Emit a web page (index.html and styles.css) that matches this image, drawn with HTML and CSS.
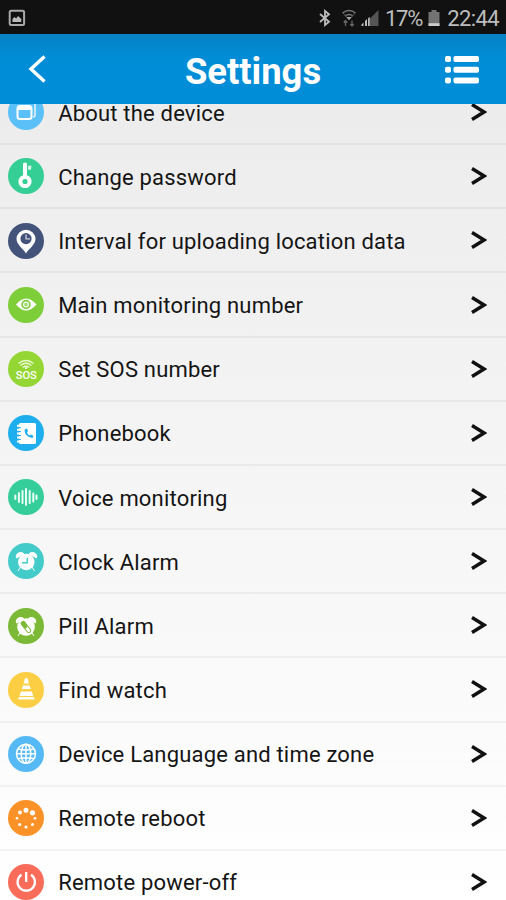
FILE: index.html
```html
<!DOCTYPE html>
<html lang="en">
<head>
<meta charset="utf-8">
<title>Settings</title>
<link rel="stylesheet" href="styles.css">
</head>
<body>
<div class="screen">
  <div class="status-bar">
    <svg class="status-picture" viewBox="0 0 18 18"><rect x="1.700" y="1.700" width="14.400" height="14.400" rx="1.500" fill="none" stroke="#aaa" stroke-width="2"/><path d="M4.500 13V10l2-2 1.600 1.400L10 7l3.300 3v3z" fill="#bbb"/></svg>
    <div class="status-right">
      <svg class="bluetooth" viewBox="0 0 14 18"><path d="M2 5l9 7.700L7 16V2l4 3.300L2 13" fill="none" stroke="#bbb" stroke-width="1.800"/></svg>
      <svg class="wifi" viewBox="0 0 16 18"><path d="M1.500 4Q8-.8 14.500 4M4 7q4-3 8 0" fill="none" stroke="#777" stroke-width="1.500"/><path d="M2 4l6 7 6-7" fill="none" stroke="#555" stroke-width="1"/><path d="M5.500 8h5L8 11z" fill="#aaa"/><path d="M4.500 11.500V17M2.700 13.500l1.800-2 1.800 2M11 11.500V17M9.200 15l1.800 2 1.800-2" fill="none" stroke="#666" stroke-width="1.300"/></svg>
      <svg class="signal" viewBox="0 0 18 18"><path d="M9 9.500L17.500 1v16H9z" fill="#555"/><path d="M.5 17v-1.500L2.500 13.500V17zM4 17v-5l2-2v7zM7 17V9.500l1.800-1.800V17z" fill="#bbb"/></svg>
      <span class="percent">17%</span>
      <svg class="battery" viewBox="0 0 12 18"><path d="M3.500 1h5v2H11.500v14H.5V3h3z" fill="#737373"/><path d="M.5 14.200h11V17H.5z" fill="#ccc"/></svg>
      <span class="time">22:44</span>
    </div>
  </div>
  <header class="title-bar">
    <svg class="back" viewBox="0 0 20 32"><path d="M16.500 3.500L3 16l13.500 12.500" fill="none" stroke="#fff" stroke-width="3.400"/></svg>
    <h1>Settings</h1>
    <svg class="menu" viewBox="0 0 36 30"><g fill="#fff"><rect x="1" y="1" width="6" height="6" rx="1.800"/><rect x="9.500" y="1" width="25.500" height="6" rx="1.800"/><rect x="1" y="11.700" width="6" height="6" rx="1.800"/><rect x="9.500" y="11.700" width="25.500" height="6" rx="1.800"/><rect x="1" y="22.400" width="6" height="6" rx="1.800"/><rect x="9.500" y="22.400" width="25.500" height="6" rx="1.800"/></g></svg>
  </header>
  <main class="viewport">
    <ul class="list">
      <li class="row">
        <svg class="icon" viewBox="0 0 36 36"><circle cx="18" cy="18" r="18" fill="#5bc0f8"/><path d="M12.500 10q0-2 2-2H25q2 0 2 2v11q0 2-2 2" fill="none" stroke="#e6f6ff" stroke-width="1.500"/><rect x="9.500" y="12" width="14" height="13" rx="2.500" fill="none" stroke="#fff" stroke-width="2"/><path d="M9.500 12h14v4h-14z" fill="#fff"/></svg>
        <span class="label">About the device</span><svg class="arrow" viewBox="0 0 16 18"><path d="M1 1.500L13 9 1 16.500"/></svg>
      </li>
      <li class="row">
        <svg class="icon" viewBox="0 0 36 36"><circle cx="18" cy="18" r="18" fill="#35cf95"/><circle cx="17" cy="23.500" r="4.600" fill="none" stroke="#fff" stroke-width="4"/><path d="M15 6q0-1.500 2-1.500T19 6v14h-4z" fill="#fff"/><path d="M20 7.800h3.500l-.6 4H20z" fill="#d5f8e9"/></svg>
        <span class="label">Change password</span><svg class="arrow" viewBox="0 0 16 18"><path d="M1 1.500L13 9 1 16.500"/></svg>
      </li>
      <li class="row">
        <svg class="icon" viewBox="0 0 36 36"><circle cx="18" cy="18" r="18" fill="#43537a"/><path d="M18 30.500C15.500 26 8.500 21.500 8.500 16a9.500 9.300 0 0 1 19 0C27.500 21.500 20.500 26 18 30.500z" fill="#fff"/><circle cx="18" cy="15.600" r="5.600" fill="#43537a"/><path d="M18 11.500v4.300h4" fill="none" stroke="#c9cedb" stroke-width="1.300"/></svg>
        <span class="label">Interval for uploading location data</span><svg class="arrow" viewBox="0 0 16 18"><path d="M1 1.500L13 9 1 16.500"/></svg>
      </li>
      <li class="row">
        <svg class="icon" viewBox="0 0 36 36"><circle cx="18" cy="18" r="18" fill="#7dce38"/><path d="M8 17.500Q18 5.500 28.500 17.500 18 29.500 8 17.500z" fill="#fff"/><circle cx="18" cy="17.500" r="3.900" fill="none" stroke="#7dce38" stroke-width="1.700"/><circle cx="18" cy="17.500" r="1.900" fill="#a5dd76"/></svg>
        <span class="label">Main monitoring number</span><svg class="arrow" viewBox="0 0 16 18"><path d="M1 1.500L13 9 1 16.500"/></svg>
      </li>
      <li class="row">
        <svg class="icon" viewBox="0 0 36 36"><circle cx="18" cy="18" r="18" fill="#94d735"/><path d="M10.500 12.500Q18 6.500 25.500 12.500M12.500 14.500q5.500-4.500 11 0M14.800 16.500q3.200-2.500 6.400 0" fill="none" stroke="#e9f8cf" stroke-width="1.300"/><circle cx="18" cy="17" r="1" fill="#fff"/><text class="sos" x="18.300" y="28.300" textLength="21" lengthAdjust="spacingAndGlyphs">SOS</text></svg>
        <span class="label">Set SOS number</span><svg class="arrow" viewBox="0 0 16 18"><path d="M1 1.500L13 9 1 16.500"/></svg>
      </li>
      <li class="row">
        <svg class="icon" viewBox="0 0 36 36"><circle cx="18" cy="18" r="18" fill="#1eaeed"/><rect x="11" y="8" width="17" height="21" rx="1.500" fill="#fff"/><path d="M9 10.800h4M9 14.700h4M9 18.600h4M9 22.500h4M9 26.400h4" stroke="#fff" stroke-width="2"/><path d="M11 12.700h2M11 16.600h2M11 20.500h2M11 24.400h2" stroke="#1eaeed" stroke-width="1"/><path d="M16.500 14.500q0 7.500 8 8.500l1-2-2.500-1.500-1.500 1q-2-1-2.500-3l1-1.200-1-2.700z" fill="#1eaeed"/></svg>
        <span class="label">Phonebook</span><svg class="arrow" viewBox="0 0 16 18"><path d="M1 1.500L13 9 1 16.500"/></svg>
      </li>
      <li class="row">
        <svg class="icon" viewBox="0 0 36 36"><circle cx="18" cy="18" r="18" fill="#35ce9b"/><path d="M7.300 16.500v3.500M10.900 14v9M14.500 12v12M18 10v16M21.700 12v12M25.300 14.500v8M28.500 16.500v3.500" stroke="#eafff7" stroke-width="2" stroke-linecap="round"/></svg>
        <span class="label">Voice monitoring</span><svg class="arrow" viewBox="0 0 16 18"><path d="M1 1.500L13 9 1 16.500"/></svg>
      </li>
      <li class="row">
        <svg class="icon" viewBox="0 0 36 36"><circle cx="18" cy="18" r="18" fill="#43cbc9"/><path d="M8.500 15Q7.500 11 11 9.800q3-1 5 1zM28.500 15Q29.500 11 26 9.800q-3-1-5 1zM12.500 24l-2.500 4M24 24l2.500 4" fill="#fff" stroke="#fff"/><circle cx="18.300" cy="19" r="8.300" fill="#fff"/><path d="M19.300 14.800v5h-5.500" fill="none" stroke="#43cbc9" stroke-width="1.500"/></svg>
        <span class="label">Clock Alarm</span><svg class="arrow" viewBox="0 0 16 18"><path d="M1 1.500L13 9 1 16.500"/></svg>
      </li>
      <li class="row">
        <svg class="icon" viewBox="0 0 36 36"><circle cx="18" cy="18" r="18" fill="#7bb937"/><path d="M8.500 15Q7.500 11 11 9.800q3-1 5 1zM27.500 15Q28.500 11 25 9.800q-3-1-5 1zM12.500 24l-2.500 4M23.500 24l2.500 4" fill="#fff" stroke="#fff"/><circle cx="18" cy="19" r="8.800" fill="#fff"/><g transform="rotate(-38 18 19)"><rect x="15.500" y="12" width="5" height="8" rx="2" fill="#7bb937"/><path d="M16 19v5q2 3 4 0v-5" fill="none" stroke="#7bb937"/></g></svg>
        <span class="label">Pill Alarm</span><svg class="arrow" viewBox="0 0 16 18"><path d="M1 1.500L13 9 1 16.500"/></svg>
      </li>
      <li class="row">
        <svg class="icon" viewBox="0 0 36 36"><circle cx="18" cy="18" r="18" fill="#fbce43"/><g fill="#fff"><path d="M18.300 6q1.800 0 2 3l.7 2.500h-5.500L16.300 9q.2-3 2-3zM15 13.500h6.500l1.300 3.500h-9zM13 19.500h10.800l1.400 4.500H11.500zM11 25h15l.7 2.500H10z"/></g></svg>
        <span class="label">Find watch</span><svg class="arrow" viewBox="0 0 16 18"><path d="M1 1.500L13 9 1 16.500"/></svg>
      </li>
      <li class="row">
        <svg class="icon" viewBox="0 0 36 36"><circle cx="18" cy="18" r="18" fill="#55b9f6"/><g fill="none" stroke="#fff" stroke-width="1.500"><circle cx="18" cy="17.800" r="9.500"/><ellipse cx="18" cy="17.800" rx="4.800" ry="9.500"/><path d="M18 8.500v18.600M8.500 17.800h19M10 13q8 2 16 0M10 22.700q8-2 16 0"/></g></svg>
        <span class="label">Device Language and time zone</span><svg class="arrow" viewBox="0 0 16 18"><path d="M1 1.500L13 9 1 16.500"/></svg>
      </li>
      <li class="row">
        <svg class="icon" viewBox="0 0 36 36"><circle cx="18" cy="18" r="18" fill="#fb9228"/><g fill="#fff"><circle cx="18" cy="10.300" r="2.500"/><circle cx="24.500" cy="12.800" r="2.600"/><circle cx="12" cy="12.500" r="2"/><circle cx="9" cy="18.200" r="1.300"/><circle cx="27" cy="18.300" r="1.400"/><circle cx="11.700" cy="24.500" r="1.500"/><circle cx="18" cy="27" r="1.600"/><circle cx="24.500" cy="24.500" r="1.500"/></g></svg>
        <span class="label">Remote reboot</span><svg class="arrow" viewBox="0 0 16 18"><path d="M1 1.500L13 9 1 16.500"/></svg>
      </li>
      <li class="row">
        <svg class="icon" viewBox="0 0 36 36"><circle cx="18" cy="18" r="18" fill="#f96c59"/><path d="M13.500 10.700a8.700 8.700 0 1 0 9.500 0M18.200 8v10" fill="none" stroke="#fff" stroke-width="2.300"/></svg>
        <span class="label">Remote power-off</span><svg class="arrow" viewBox="0 0 16 18"><path d="M1 1.500L13 9 1 16.500"/></svg>
      </li>
    </ul>
  </main>
</div>
</body>
</html>
```
FILE: styles.css
```css
* { box-sizing: border-box; }
body { margin: 0; font-family: Roboto, "Liberation Sans", sans-serif; }
svg { display: block; flex: none; }
.screen { width: 506px; height: 900px; display: flex; flex-direction: column; overflow: hidden; }
.status-bar { height: 34px; flex: none; padding: 1px 8px 0; display: flex; align-items: center; justify-content: space-between; background: #111; color: #bdbdbd; font-size: 22px; line-height: 32px; }
.status-picture { width: 18px; height: 18px; }
.status-right { display: flex; align-items: center; }
.bluetooth { width: 14px; height: 18px; margin-right: 9px; }
.wifi { width: 16px; height: 18px; margin-right: 4px; }
.signal { width: 18px; height: 18px; margin-right: 6px; }
.battery { width: 12px; height: 18px; margin: 0 7px 0 6px; }
.percent { margin-top: 2px; letter-spacing: -1.2px; }
.time { margin: 2px -1px 0 0; letter-spacing: -0.6px; }
.title-bar { height: 70px; flex: none; display: grid; grid-template-columns: 80px 1fr 80px; align-items: center; background: linear-gradient(#0782c4, #008dd7 35%); }
.back { width: 20px; height: 32px; margin-left: 28px; }
.menu { width: 36px; height: 30px; margin: 2px 0 0 18px; }
h1 { margin: 5px 0 0; color: #fff; text-align: center; font-size: 36.4px; line-height: 42px; font-weight: 700; }
.viewport { flex: 1; min-height: 0; overflow: hidden; background: linear-gradient(#ececec, #fff); }
.list { list-style: none; margin: -23px 0 0; padding: 0; }
.row { height: 64.17px; padding: 0 19.5px 0 8px; display: flex; align-items: center; border-bottom: 2px solid rgba(0, 0, 0, 0.045); }
.icon { width: 36px; height: 36px; margin-top: 0.5px; }
.label { flex: 1; margin: 3px 0 0 14.2px; color: #151515; font-size: 22px; line-height: 28px; letter-spacing: 0.19px; white-space: nowrap; }
.arrow { width: 16px; height: 18px; fill: none; stroke: #111; stroke-width: 3.4; }
.sos { fill: #fff; font: 500 11px Roboto, sans-serif; text-anchor: middle; }
```
